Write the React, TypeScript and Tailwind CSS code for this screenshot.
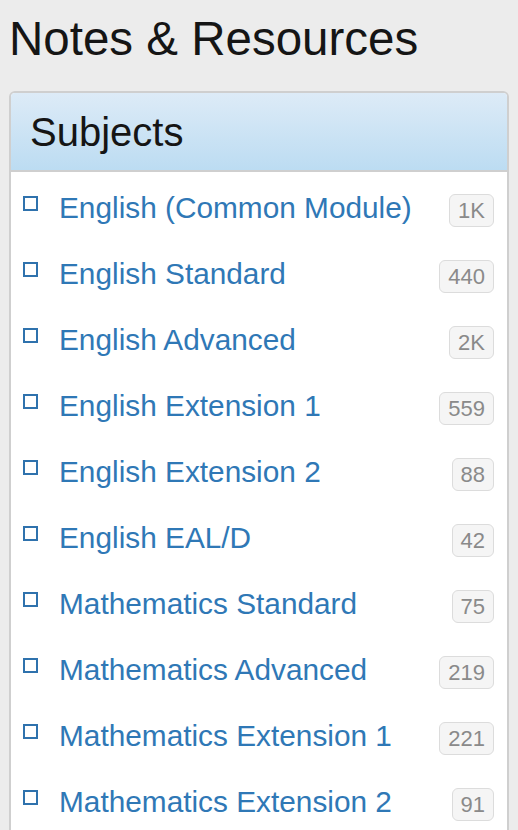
import React from 'react';

const SUBJECTS: { name: string; count: string }[] = [
  { name: 'English (Common Module)', count: '1K' },
  { name: 'English Standard', count: '440' },
  { name: 'English Advanced', count: '2K' },
  { name: 'English Extension 1', count: '559' },
  { name: 'English Extension 2', count: '88' },
  { name: 'English EAL/D', count: '42' },
  { name: 'Mathematics Standard', count: '75' },
  { name: 'Mathematics Advanced', count: '219' },
  { name: 'Mathematics Extension 1', count: '221' },
  { name: 'Mathematics Extension 2', count: '91' },
];

export default function App() {
  return (
    <div
      className="min-h-screen bg-[#ececec] pb-6"
      style={{ fontFamily: '"Liberation Sans", Arial, Helvetica, sans-serif' }}
    >
      <h1 className="pl-[9px] pt-[15px] text-[47.5px] leading-none text-[#151515] font-normal">
        Notes &amp; Resources
      </h1>

      <div className="mx-[9px] mt-[28px] rounded-[6px] border-2 border-[#cfcfcf] bg-white overflow-hidden">
        {/* Panel header */}
        <div className="bg-gradient-to-b from-[#ddebf7] to-[#bcdcf2] border-b-2 border-[#cfcfcf] pl-[19px] pt-[19px] pb-[18px]">
          <h2 className="text-[40px] leading-none text-[#151515] font-normal">Subjects</h2>
        </div>

        {/* Subject list */}
        <ul className="pt-[3px]">
          {SUBJECTS.map(s => (
            <li key={s.name} className="flex items-center h-[66px] pl-[12px] pr-[13px]">
              <span className="w-[15px] h-[15px] border-2 border-[#2f72ad] -mt-[9px] shrink-0" />
              <a href="#" className="ml-[21px] flex-1 text-[29.8px] leading-none text-[#2f78b6]">
                {s.name}
              </a>
              <span className="mt-[6px] h-[33px] flex items-center rounded-[6px] border border-[#dcdcdc] bg-[#f5f5f5] px-[8px] text-[22px] leading-none text-[#8a8a8a]">
                {s.count}
              </span>
            </li>
          ))}
        </ul>
      </div>
    </div>
  );
}
